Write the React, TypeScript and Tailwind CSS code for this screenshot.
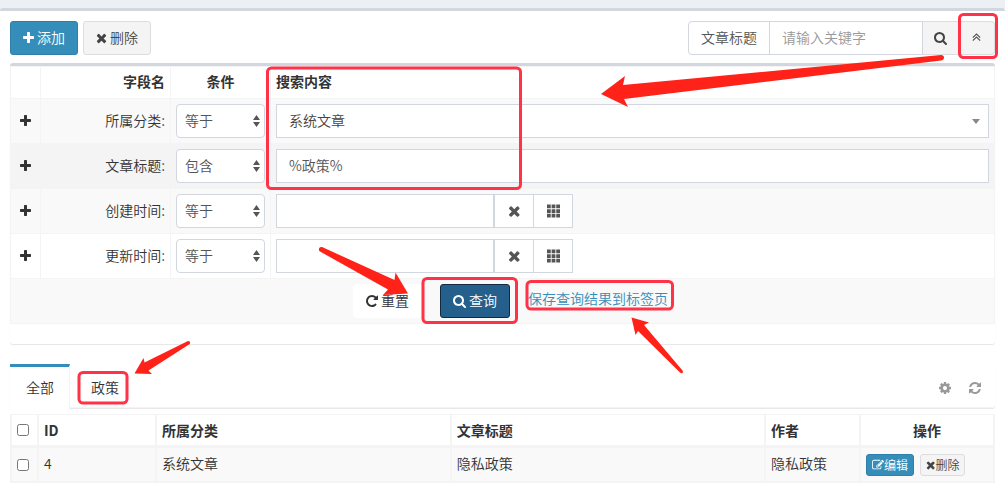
import { ReactNode, useState } from 'react';

import clsx from 'clsx';

// left bearing + advance width per glyph, so icons sit in text like the icon font does
const glyphs = {
  plus: {
    x: 192,
    width: 1408,
    path: 'M1600 736v192q0 40-28 68t-68 28h-416v416q0 40-28 68t-68 28h-192q-40 0-68-28t-28-68v-416h-416q-40 0-68-28t-28-68v-192q0-40 28-68t68-28h416v-416q0-40 28-68t68-28h192q40 0 68 28t28 68v416h416q40 0 68 28t28 68z',
  },
  times: {
    x: 192,
    width: 1408,
    path: 'M1490 1322q0 40-28 68l-136 136q-28 28-68 28t-68-28l-294-294-294 294q-28 28-68 28t-68-28l-136-136q-28-28-28-68t28-68l294-294-294-294q-28-28-28-68t28-68l136-136q28-28 68-28t68 28l294 294 294-294q28-28 68-28t68 28l136 136q28 28 28 68t-28 68l-294 294 294 294q28 28 28 68z',
  },
  search: {
    x: 64,
    width: 1664,
    path: 'M1216 832q0-185-131.5-316.5t-316.5-131.5-316.5 131.5-131.5 316.5 131.5 316.5 316.5 131.5 316.5-131.5 131.5-316.5zm512 832q0 52-38 90t-90 38q-54 0-90-38l-343-342q-179 124-399 124-143 0-273.5-55.5t-225-150-150-225-55.5-273.5 55.5-273.5 150-225 225-150 273.5-55.5 273.5 55.5 225 150 150 225 55.5 273.5q0 220-124 399l343 343q37 37 37 90z',
  },
  angleDoubleUp: {
    x: 320,
    width: 1152,
    path: 'M1395 1184q0 13-10 23l-50 50q-10 10-23 10t-23-10l-393-393-393 393q-10 10-23 10t-23-10l-50-50q-10-10-10-23t10-23l466-466q10-10 23-10t23 10l466 466q10 10 10 23zm0-384q0 13-10 23l-50 50q-10 10-23 10t-23-10l-393-393-393 393q-10 10-23 10t-23-10l-50-50q-10-10-10-23t10-23l466-466q10-10 23-10t23 10l466 466q10 10 10 23z',
  },
  grid: {
    x: 64,
    width: 1664,
    path: 'M64 64h480v480h-480zM656 64h480v480h-480zM1248 64h480v480h-480zM64 656h480v480h-480zM656 656h480v480h-480zM1248 656h480v480h-480zM64 1248h480v480h-480zM656 1248h480v480h-480zM1248 1248h480v480h-480z',
  },
  repeat: {
    x: 128,
    width: 1536,
    path: 'M1664 256v448q0 26-19 45t-45 19h-448q-42 0-59-40-17-39 14-69l138-138q-148-137-349-137-104 0-198.5 40.5t-163.5 109.5-109.5 163.5-40.5 198.5 40.5 198.5 109.5 163.5 163.5 109.5 198.5 40.5q119 0 225-52t179-147q7-10 23-12 15 0 25 9l137 138q9 8 9.5 20.5t-7.5 22.5q-109 132-264 204.5t-327 72.5q-156 0-298-61t-245-164-164-245-61-298 61-298 164-245 245-164 298-61q147 0 284.5 55.5t244.5 156.5l130-129q29-31 70-14 39 17 39 59z',
  },
  refresh: {
    x: 128,
    width: 1536,
    path: 'M1639 1056q0 5-1 7-64 268-268 434.5t-478 166.5q-146 0-282.5-55t-243.5-157l-129 129q-19 19-45 19t-45-19-19-45v-448q0-26 19-45t45-19h448q26 0 45 19t19 45-19 45l-137 137q71 66 161 102t187 36q134 0 250-65t186-179q11-17 53-117 8-23 30-23h192q13 0 22.5 9.5t9.5 22.5zm25-800v448q0 26-19 45t-45 19h-448q-26 0-45-19t-19-45 19-45l138-138q-148-137-349-137-134 0-250 65t-186 179q-11 17-53 117-8 23-30 23h-199q-13 0-22.5-9.5t-9.5-22.5v-7q65-268 270-434.5t480-166.5q146 0 284 55.5t245 156.5l130-129q19-19 45-19t45 19 19 45z',
  },
  cog: {
    x: 128,
    width: 1536,
    path: 'M1152 896q0-106-75-181t-181-75-181 75-75 181 75 181 181 75 181-75 75-181zm512-109v222q0 12-8 23t-20 13l-185 28q-19 54-39 91 35 50 107 138 10 12 10 25t-9 23q-27 37-99 108t-94 71q-12 0-26-9l-138-108q-44 23-91 38-16 136-29 186-7 28-36 28h-222q-14 0-24.5-8.5t-11.5-21.5l-28-184q-49-16-90-37l-141 107q-10 9-25 9-14 0-25-11-126-114-165-168-7-10-7-23 0-12 8-23 15-21 51-66.5t54-70.5q-27-50-41-99l-183-27q-13-2-21-12.5t-8-23.5v-222q0-12 8-23t19-13l186-28q14-46 39-92-40-57-107-138-10-12-10-24 0-10 9-23 26-36 98.5-107.5t94.5-71.5q13 0 26 10l138 107q44-23 91-38 16-136 29-186 7-28 36-28h222q14 0 24.5 8.5t11.5 21.5l28 184q49 16 90 37l142-107q9-9 24-9 13 0 25 10 129 119 165 170 7 8 7 22 0 12-8 23-15 21-51 66.5t-54 70.5q26 50 41 98l183 28q13 2 21 12.5t8 23.5z',
  },
  edit: {
    x: 0,
    width: 1792,
    path: 'M888 1184l116-116-152-152-116 116v56h96v96h56zm440-720q-16-16-33 1l-350 350q-17 17-1 33t33-1l350-350q17-17 1-33zm80 594v190q0 119-84.5 203.5t-203.5 84.5h-832q-119 0-203.5-84.5t-84.5-203.5v-832q0-119 84.5-203.5t203.5-84.5h832q63 0 117 25 15 7 18 23 3 17-9 29l-49 49q-14 14-32 8-23-6-45-6h-832q-66 0-113 47t-47 113v832q0 66 47 113t113 47h832q66 0 113-47t47-113v-126q0-13 9-22l64-64q15-15 35-7t20 29zm-96-738l288 288-672 672h-288v-288zm444 132l-92 92-288-288 92-92q28-28 68-28t68 28l152 152q28 28 28 68t-28 68z',
  },
};

type IconProps = {
  name: keyof typeof glyphs;
  className?: string;
};

const Icon = ({ name, className = 'h-3.5' }: IconProps) => {
  const { x, width, path } = glyphs[name];
  return (
    <svg
      aria-hidden="true"
      className={clsx('w-auto shrink-0 fill-current', className)}
      viewBox={`${x} 0 ${width} 1792`}
    >
      <path d={path} />
    </svg>
  );
};

type ButtonProps = {
  children: ReactNode;
  className?: string;
  label?: string;
  onClick?: () => void;
};

const Button = ({ children, className, label, onClick }: ButtonProps) => (
  <button
    type="button"
    aria-label={label}
    onClick={onClick}
    className={clsx('flex items-center justify-center border', className)}
  >
    {children}
  </button>
);

const primary = 'border-[#2f7fa8] bg-[#358eba] text-white';
const plain = 'border-[#dddddd] bg-[#f4f4f4] text-[#444444]';

const ConditionSelect = ({ value, label }: { value: string; label: string }) => (
  <div className="relative">
    <select
      aria-label={`${label} 条件`}
      defaultValue={value}
      className="block h-[34px] w-full appearance-none rounded border border-[#d2d6de] bg-white pb-0.5 pl-2 text-[#555555]"
    >
      <option>等于</option>
      <option>包含</option>
    </select>
    <svg
      aria-hidden="true"
      className="pointer-events-none absolute right-[5px] top-[11px] h-3 w-[7px] fill-[#555555]"
      viewBox="0 0 7 12"
    >
      <path d="M3.5 0L7 5H0zM3.5 12L0 7H7z" />
    </svg>
  </div>
);

const DateField = ({ id }: { id: string }) => (
  <div className="flex">
    <input
      id={id}
      type="text"
      className="h-[34px] w-[218px] border border-[#d2d6de] bg-white px-3 text-[#555555]"
    />
    <Button
      label="清除"
      className="-ml-px h-[34px] w-[41px] border-[#d2d6de] border-l-2 bg-white text-[#555555]"
    >
      <Icon name="times" className="h-4" />
    </Button>
    <Button
      label="选择日期"
      className="-ml-px h-[34px] w-10 border-[#d2d6de] bg-white text-[#555555]"
    >
      <Icon name="grid" />
    </Button>
  </div>
);

const filters = [
  { id: 'category', name: '所属分类', condition: '等于', rowClass: 'bg-[#f9f9f9]' },
  { id: 'title', name: '文章标题', condition: '包含', rowClass: 'bg-[#f4f4f4]' },
  { id: 'created', name: '创建时间', condition: '等于', rowClass: 'bg-[#f9f9f9]' },
  { id: 'updated', name: '更新时间', condition: '等于', rowClass: 'bg-white' },
];

const FilterField = ({ id }: { id: string }) => {
  if (id === 'category') {
    return (
      <div className="relative">
        <select
          id={id}
          className="block h-[34px] w-full appearance-none border border-[#d2d6de] bg-white pb-0.5 pl-3 text-[#444444]"
        >
          <option>系统文章</option>
        </select>
        <svg
          aria-hidden="true"
          className="pointer-events-none absolute right-[9px] top-[15px] h-[5px] w-2 fill-[#888888]"
          viewBox="0 0 8 5"
        >
          <path d="M0 0h8L4 5z" />
        </svg>
      </div>
    );
  }
  if (id === 'title') {
    return (
      <input
        id={id}
        type="text"
        defaultValue="%政策%"
        className="block h-[34px] w-full border border-[#d2d6de] bg-white px-3 pb-0.5 text-[#555555]"
      />
    );
  }
  return <DateField id={id} />;
};

const filterBorder = 'border border-[#f4f4f4]';
const filterCell = clsx(filterBorder, 'p-[5px]');
const filterHead = clsx(filterBorder, 'px-[5px] pb-1');

const FilterPanel = () => (
  <form className="mt-2 rounded-[3px] border-t-3 border-[#d2d6de] pb-5 shadow-[0_1px_1px_rgba(0,0,0,0.1)]">
    <table className="w-full table-fixed border-collapse">
      <colgroup>
        <col className="w-[30px]" />
        <col className="w-[130px]" />
        <col className="w-[100px]" />
        <col />
      </colgroup>
      <thead>
        <tr className="h-8">
          <th className={filterHead} />
          <th className={clsx(filterHead, 'text-right')}>字段名</th>
          <th className={clsx(filterHead, 'text-center')}>条件</th>
          <th className={clsx(filterHead, 'text-left')}>搜索内容</th>
        </tr>
      </thead>
      <tbody>
        {filters.map(({ id, name, condition, rowClass }) => (
          <tr key={id} className={rowClass}>
            <td className={filterCell}>
              <button type="button" aria-label="添加条件" className="mx-auto block">
                <Icon name="plus" />
              </button>
            </td>
            <td className={clsx(filterBorder, 'px-[5px] pb-0.5 text-right')}>
              <label htmlFor={id}>{name}:</label>
            </td>
            <td className={filterCell}>
              <ConditionSelect value={condition} label={name} />
            </td>
            <td className={filterCell}>
              <FilterField id={id} />
            </td>
          </tr>
        ))}
        <tr className="bg-[#f9f9f9]">
          <td colSpan={4} className={filterCell}>
            <div className="flex justify-center gap-[18px] pl-4">
              <Button className="h-[34px] gap-[3px] rounded-[3px] border-white bg-white px-3 text-[#333333]">
                <Icon name="repeat" />
                <span className="pb-0.5">重置</span>
              </Button>
              <Button className="h-[34px] gap-[3px] rounded-[3px] border-[#122b40] bg-[#255f8c] px-3 text-white">
                <Icon name="search" />
                <span className="pb-0.5">查询</span>
              </Button>
              <a href="#save" className="mt-1 text-[#358eba]">
                保存查询结果到标签页
              </a>
            </div>
          </td>
        </tr>
      </tbody>
    </table>
  </form>
);

const tabs = ['全部', '政策'];

const Tabs = () => {
  const [active, setActive] = useState(tabs[0]);

  return (
    <div className="mt-5 flex h-11 items-stretch rounded-[3px] border-b border-[#f4f4f4] shadow-[0_1px_1px_rgba(0,0,0,0.1)]">
      {tabs.map((tab) => (
        <button
          key={tab}
          type="button"
          onClick={() => setActive(tab)}
          className={clsx(
            'mr-[5px] border-t-3 border-r pl-4 pr-[15px]',
            tab === active
              ? '-mb-[3px] border-r-[#f4f4f4] border-t-[#358eba] bg-white pb-[3px]'
              : 'border-transparent',
          )}
        >
          {tab}
        </button>
      ))}
      <div className="ml-auto flex items-center gap-[18px] pr-3.5 pt-1 text-[#999999]">
        <button type="button" aria-label="设置">
          <Icon name="cog" />
        </button>
        <button type="button" aria-label="刷新">
          <Icon name="refresh" />
        </button>
      </div>
    </div>
  );
};

const articles = [{ id: 4, category: '系统文章', title: '隐私政策', author: '隐私政策' }];

const cell = 'border border-[#f4f4f4] px-[5px]';
const headCell = clsx(cell, 'border-b-2 text-left');
const textCell = clsx(cell, 'pb-1');

const ArticleTable = () => (
  <table className="mt-1.5 w-full table-fixed border-separate border-spacing-0 border border-t-0 border-[#f4f4f4]">
    <colgroup>
      <col className="w-[27px]" />
      <col className="w-[12%]" />
      <col className="w-[30%]" />
      <col />
      <col className="w-[95px]" />
      <col className="w-[134px]" />
    </colgroup>
    <thead>
      <tr className="h-[33px]">
        <th className={headCell}>
          <input type="checkbox" aria-label="全选" className="block size-3" />
        </th>
        <th className={headCell}>ID</th>
        <th className={headCell}>所属分类</th>
        <th className={headCell}>文章标题</th>
        <th className={headCell}>作者</th>
        <th className={clsx(cell, 'border-b-2 text-center')}>操作</th>
      </tr>
    </thead>
    <tbody>
      {articles.map(({ id, category, title, author }) => (
        <tr key={id} className="h-[35px] bg-[#f9f9f9]">
          <td className={cell}>
            <input type="checkbox" aria-label={`选择 ${id}`} className="block size-3" />
          </td>
          <td className={textCell}>{id}</td>
          <td className={textCell}>{category}</td>
          <td className={textCell}>{title}</td>
          <td className={textCell}>{author}</td>
          <td className={cell}>
            <div className="flex gap-1.5 text-xs">
              <Button className={clsx('h-[22px] rounded-[3px] px-[5px]', primary)}>
                <Icon name="edit" className="h-3" />
                编辑
              </Button>
              <Button className={clsx('h-[22px] rounded-[3px] px-[5px]', plain)}>
                <Icon name="times" className="h-3" />
                删除
              </Button>
            </div>
          </td>
        </tr>
      ))}
    </tbody>
  </table>
);

// Red frames and arrows drawn over the page to point out the steps
const Annotations = () => (
  <svg
    aria-hidden="true"
    className="pointer-events-none absolute left-0 top-0 h-[491px] w-[1005px]"
    viewBox="0 0 1005 491"
  >
    <g fill="none" stroke="#ff3247" strokeWidth="3">
      <rect x="959.5" y="14.5" width="37" height="43" rx="4" />
      <rect x="267.5" y="68" width="253" height="120.5" rx="4" />
      <rect x="423" y="278.5" width="93.5" height="44" rx="4" />
      <rect x="527" y="281.5" width="145.5" height="27.5" rx="4" />
      <rect x="79" y="372.5" width="48" height="30.5" rx="4" />
    </g>
    <g fill="#ff2219">
      <path d="M601 94L625 76L623 85L941 55Q944 55 944 57.5Q944 60 941 60.5L624 99L628 107Z" />
      <path d="M408 293.5L395.5 272.5L394.5 280L322 247Q319.5 246.5 319 248.5Q318.5 250.5 320 251.5L388 289.5L383 295Z" />
      <path d="M631.5 317.5L649 322.5L644 325L682.5 370.5Q683.5 372 682.5 373Q681 373.5 680 372.5L638 331L635.5 335Z" />
      <path d="M134.5 373.5L143.5 358L144.5 362.5L188 341Q189.5 341 190 342Q190.5 343.5 189 344.5L148.5 370.5L152 374Z" />
    </g>
  </svg>
);

export default function App() {
  const [open, setOpen] = useState(true);

  return (
    <div className="relative min-h-screen bg-[#ecf0f5] pt-2 font-['Noto_Sans_CJK_SC','Liberation_Sans',sans-serif] text-sm font-[350] text-[#333333]">
      <main className="min-h-[calc(100vh-8px)] rounded-[3px] border-t-3 border-[#d2d6de] bg-white p-2.5">
        <div className="flex gap-[5px]">
          <Button className={clsx('h-[34px] gap-[3px] rounded-[3px] px-3', primary)}>
            <Icon name="plus" />
            <span className="pb-0.5">添加</span>
          </Button>
          <Button className={clsx('h-[34px] gap-[3px] rounded-[3px] px-3', plain)}>
            <Icon name="times" />
            <span className="pb-0.5">删除</span>
          </Button>
          <div className="ml-auto flex h-[34px] items-stretch">
            <label
              htmlFor="keyword"
              className="flex items-center rounded-l border border-[#d2d6de] px-3 pb-0.5 text-[#555555]"
            >
              文章标题
            </label>
            <input
              id="keyword"
              type="text"
              placeholder="请输入关键字"
              className="-ml-px w-[154px] border border-[#d2d6de] px-3 pb-0.5 placeholder:text-[#999999]"
            />
            <Button label="搜索" className="w-9 border-l-0 border-[#dddddd] bg-[#f4f4f4] text-[#444444]">
              <Icon name="search" />
            </Button>
            <Button
              label="收起"
              onClick={() => setOpen(!open)}
              className="w-9 rounded-r border-l-0 border-[#dddddd] bg-[#f4f4f4] text-[#444444]"
            >
              <Icon name="angleDoubleUp" />
            </Button>
          </div>
        </div>
        {open && <FilterPanel />}
        <Tabs />
        <ArticleTable />
      </main>
      <Annotations />
    </div>
  );
}
